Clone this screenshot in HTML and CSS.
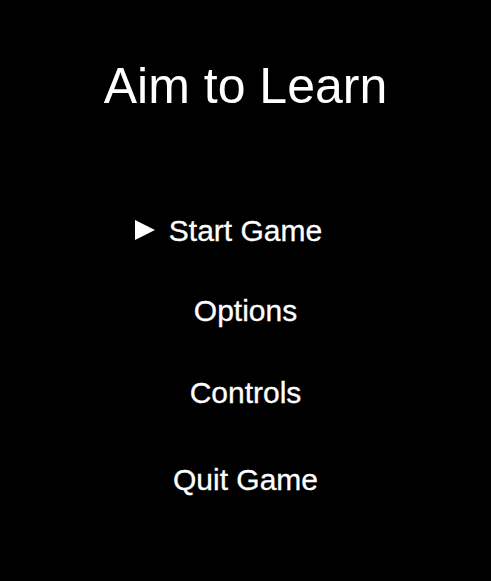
FILE: index.html
```html
<!DOCTYPE html>
<html lang="en">
<head>
<meta charset="utf-8">
<title>Aim to Learn</title>
<link rel="stylesheet" href="styles.css">
</head>
<body>
<main class="screen">
  <h1 class="title">Aim to Learn</h1>
  <ul class="menu">
    <li class="menu-item menu-item--start">
      <span class="label label--selected">
        <svg class="cursor" width="20" height="20" viewBox="0 0 20 20" aria-hidden="true"><polygon points="0,0 20,10 0,20" fill="#fff"/></svg>
        Start Game
      </span>
    </li>
    <li class="menu-item menu-item--options"><span class="label">Options</span></li>
    <li class="menu-item menu-item--controls"><span class="label">Controls</span></li>
    <li class="menu-item menu-item--quit"><span class="label">Quit Game</span></li>
  </ul>
</main>
</body>
</html>
```
FILE: styles.css
```css
html, body {
  margin: 0;
  padding: 0;
  background: #000;
}
body {
  width: 491px;
  height: 581px;
  overflow: hidden;
  color: #fff;
  font-family: "Liberation Sans", Arial, sans-serif;
}
.screen {
  display: flex;
  flex-direction: column;
  align-items: center;
}
.title {
  margin: 57px 0 0;
  font-size: 50px;
  font-weight: normal;
  line-height: 58px;
}
.menu {
  list-style: none;
  margin: 100px 0 0;
  padding: 0;
  display: flex;
  flex-direction: column;
  align-items: center;
  width: 100%;
}
.menu-item {
  font-size: 30px;
  line-height: 32px;
  height: 32px;
  -webkit-text-stroke: 0.3px #fff;
}
.menu-item--options { margin-top: 48px; }
.menu-item--controls { margin-top: 50px; }
.menu-item--quit { margin-top: 55px; }
.label {
  position: relative;
  display: inline-block;
}
.cursor {
  position: absolute;
  right: calc(100% + 14px);
  top: 5px;
}
```
